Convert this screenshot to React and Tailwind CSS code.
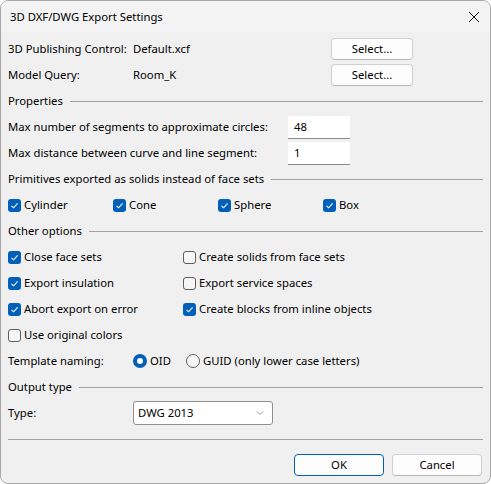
import { ChevronDown } from 'lucide-react';

const Check = ({ checked }) => (
    checked ? (
        <span className="w-[13px] h-[13px] rounded-[3px] bg-[#005fb8] flex items-center justify-center shrink-0">
            <svg width="9" height="9" viewBox="0 0 9 9" fill="none">
                <path d="M1.5 4.8 L3.6 6.8 L7.6 2.4" stroke="white" strokeWidth="1.1" />
            </svg>
        </span>
    ) : (
        <span className="w-[13px] h-[13px] rounded-[3px] border border-[#5f5f5f] bg-[#f6f6f6] shrink-0" />
    )
);

const Radio = ({ checked }) => (
    checked ? (
        <span className="w-[14px] h-[14px] rounded-full bg-[#005fb8] flex items-center justify-center shrink-0">
            <span className="w-[6px] h-[6px] rounded-full bg-white" />
        </span>
    ) : (
        <span className="w-[14px] h-[14px] rounded-full border border-[#5f5f5f] bg-[#f6f6f6] shrink-0" />
    )
);

const CheckItem = ({ checked, label, width }) => (
    <div className={`flex items-center gap-[3px] shrink-0 ${width}`}>
        <Check checked={checked} />
        <span>{label}</span>
    </div>
);

const Section = ({ title }) => (
    <div className="h-[26px] flex items-center gap-[7px]">
        <span>{title}</span>
        <div className="flex-1 h-px bg-[#a0a0a0]" />
    </div>
);

const Button = ({ children, primary }) => (
    <button className={`h-[22px] w-[90px] rounded-[4px] bg-[#fdfdfd] flex items-center justify-center ${primary ? 'border border-[#005fb8]' : 'border border-[#d0d0d0] border-b-[#b5b5b5]'}`}>
        {children}
    </button>
);

const App = () => {
    return (
        <div className="w-[491px] h-[484px] bg-white">
            <div className="w-full h-full rounded-[8px] border border-[#a8a8a8] bg-[#f0f0f0] overflow-hidden text-[11.3px] leading-none whitespace-nowrap text-black font-['Segoe_UI','Noto_Sans',sans-serif]">
                {/* Title bar */}
                <div className="h-[31px] flex items-center justify-between pl-[9px] pr-[9px] bg-[#f3f3f3]">
                    <span>3D DXF/DWG Export Settings</span>
                    <svg width="12" height="12" viewBox="0 0 12 12" fill="none" className="mr-px">
                        <path d="M1 1 L11 11 M11 1 L1 11" stroke="#1a1a1a" strokeWidth="1" />
                    </svg>
                </div>

                <div className="pt-[4px] pl-[7px] pr-[7px]">
                    <div className="h-[26px] flex items-center">
                        <span className="w-[125px] shrink-0">3D Publishing Control:</span>
                        <span className="w-[198px] shrink-0">Default.xcf</span>
                        <button className="w-[82px] h-[22px] rounded-[4px] bg-[#fdfdfd] border border-[#d0d0d0] border-b-[#b5b5b5]">Select...</button>
                    </div>
                    <div className="h-[26px] flex items-center">
                        <span className="w-[125px] shrink-0">Model Query:</span>
                        <span className="w-[198px] shrink-0">Room_K</span>
                        <button className="w-[82px] h-[22px] rounded-[4px] bg-[#fdfdfd] border border-[#d0d0d0] border-b-[#b5b5b5]">Select...</button>
                    </div>

                    <Section title="Properties" />
                    <div className="h-[26px] flex items-center">
                        <span className="w-[280px] shrink-0">Max number of segments to approximate circles:</span>
                        <div className="w-[62px] h-[23px] bg-white border-b border-[#8a8a8a] flex items-center pl-[6px]">48</div>
                    </div>
                    <div className="h-[26px] flex items-center">
                        <span className="w-[280px] shrink-0">Max distance between curve and line segment:</span>
                        <div className="w-[62px] h-[23px] bg-white border-b border-[#8a8a8a] flex items-center pl-[6px]">1</div>
                    </div>

                    <Section title="Primitives exported as solids instead of face sets" />
                    <div className="h-[26px] flex items-center">
                        <CheckItem checked label="Cylinder" width="w-[105px]" />
                        <CheckItem checked label="Cone" width="w-[105px]" />
                        <CheckItem checked label="Sphere" width="w-[105px]" />
                        <CheckItem checked label="Box" width="w-[105px]" />
                    </div>

                    <Section title="Other options" />
                    <div className="h-[26px] flex items-center">
                        <CheckItem checked label="Close face sets" width="w-[175px]" />
                        <CheckItem label="Create solids from face sets" />
                    </div>
                    <div className="h-[26px] flex items-center">
                        <CheckItem checked label="Export insulation" width="w-[175px]" />
                        <CheckItem label="Export service spaces" />
                    </div>
                    <div className="h-[26px] flex items-center">
                        <CheckItem checked label="Abort export on error" width="w-[175px]" />
                        <CheckItem checked label="Create blocks from inline objects" />
                    </div>
                    <div className="h-[26px] flex items-center">
                        <CheckItem label="Use original colors" />
                    </div>

                    <div className="h-[26px] flex items-center">
                        <span className="w-[125px] shrink-0">Template naming:</span>
                        <div className="w-[53px] shrink-0 flex items-center gap-[3px]">
                            <Radio checked />
                            <span>OID</span>
                        </div>
                        <div className="flex items-center gap-[3px]">
                            <Radio />
                            <span>GUID (only lower case letters)</span>
                        </div>
                    </div>

                    <Section title="Output type" />
                    <div className="h-[26px] flex items-center">
                        <span className="w-[125px] shrink-0">Type:</span>
                        <div className="w-[140px] h-[24px] bg-white border border-[#8f8f8f] rounded-[3px] flex items-center justify-between pl-[4px] pr-[6px]">
                            <span>DWG 2013</span>
                            <ChevronDown className="w-[12px] h-[12px] text-[#555]" strokeWidth={1.2} />
                        </div>
                    </div>

                    <div className="h-[26px] flex items-center">
                        <div className="flex-1 h-px bg-[#a0a0a0]" />
                    </div>

                    <div className="h-[26px] flex items-center justify-end gap-[8px] pr-px">
                        <Button primary>OK</Button>
                        <Button>Cancel</Button>
                    </div>
                </div>
            </div>
        </div>
    );
};

export default App;
